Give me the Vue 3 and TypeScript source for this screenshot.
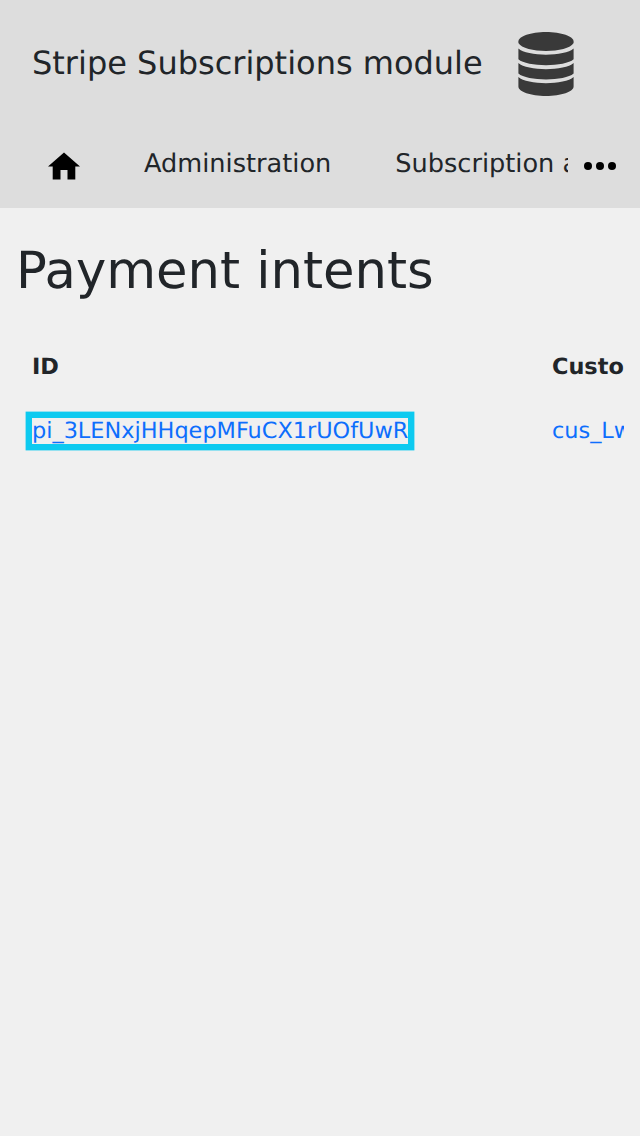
<script setup lang="ts">
interface Intent {
  id: string
  customer: string
}

const navItems: string[] = ['Administration', 'Subscription assistant']
const columns: string[] = ['ID', 'Customer']
const intents: Intent[] = [{ id: 'pi_3LENxjHHqepMFuCX1rUOfUwR', customer: 'cus_LwHqepMFuCX1' }]
</script>

<template>
  <div class="page">
    <header class="header">
      <div class="brand">
        <span class="title">Stripe Subscriptions module</span>
        <svg class="logo" width="56" height="64" viewBox="0 0 56 64" fill="#393939">
          <path d="M.4 9.500C.4 4.300 12.800 0 28 0S55.600 4.300 55.600 9.500V11C50 21.600 6 21.600 .4 11Z" />
          <path d="M.4 16.500C9 24.700 47 24.700 55.600 16.500V27.300C47 35.200 9 35.200 .4 27.300Z" />
          <path d="M.4 31C9 39.200 47 39.200 55.600 31V41.500C47 49.400 9 49.400 .4 41.500Z" />
          <path d="M.4 45.100C9 53.200 47 53.200 55.600 45.100V54.500C55.600 59.700 43.200 64 28 64S.4 59.700 .4 54.500Z" />
        </svg>
      </div>
      <nav class="nav">
        <div class="nav-scroll">
          <a class="home" aria-label="Home">
            <svg width="32" height="28" viewBox="0 0 32 28">
              <path d="M16 .5L32 14.500H27.300V27.500H19.500V18H12.500V27.500H4.700V14.500H0Z" />
            </svg>
          </a>
          <a v-for="item in navItems" :key="item" class="nav-link">{{ item }}</a>
        </div>
        <button class="more" aria-label="More">
          <svg width="32" height="8" viewBox="0 0 32 8">
            <circle cx="4" cy="4" r="4" />
            <circle cx="16" cy="4" r="4" />
            <circle cx="28" cy="4" r="4" />
          </svg>
        </button>
      </nav>
    </header>
    <main class="main">
      <h1>Payment intents</h1>
      <div class="table-wrap">
        <table>
          <thead>
            <tr>
              <th v-for="column in columns" :key="column">{{ column }}</th>
            </tr>
          </thead>
          <tbody>
            <tr v-for="intent in intents" :key="intent.id">
              <td><a class="focused">{{ intent.id }}</a></td>
              <td><a>{{ intent.customer }}</a></td>
            </tr>
          </tbody>
        </table>
      </div>
    </main>
  </div>
</template>

<style>
body {
  margin: 0;
  background: #f0f0f0;
}
</style>

<style scoped>
.page {
  min-height: 1136px;
  color: #212529;
  background: #f0f0f0;
  font-family: "DejaVu Sans", sans-serif;
  text-rendering: geometricPrecision;
  overflow: hidden;
}
.header {
  height: 208px;
  background: #ddd;
}
.brand {
  display: flex;
  align-items: center;
  height: 128px;
  padding-left: 32px;
}
.title {
  width: 486px;
  padding-bottom: 2px;
  font-size: 32px;
  line-height: 48px;
  white-space: nowrap;
}
.logo {
  flex: none;
}
.nav {
  display: flex;
  height: 80px;
}
.nav-scroll {
  display: flex;
  width: 568px;
  overflow: hidden;
}
.home {
  flex: none;
  padding: 24px 32px 0 48px;
}
.home svg {
  display: block;
}
.nav-link {
  flex: none;
  padding: 17px 32px 0;
  font-size: 25.6px;
  line-height: 38.4px;
  white-space: nowrap;
}
.more {
  display: flex;
  width: 72px;
  padding: 34px 0 0 16px;
  border: 0;
  background: none;
}
.main {
  padding: 33px 16px 0;
}
h1 {
  margin: 0;
  font-size: 51.2px;
  font-weight: 400;
  line-height: 61px;
}
.table-wrap {
  margin-top: 32px;
  overflow: hidden;
}
table {
  width: 860px;
  border-collapse: collapse;
  table-layout: fixed;
  font-size: 22.4px;
  line-height: 33px;
}
th,
td {
  height: 33px;
  padding: 16px;
  text-align: left;
  white-space: nowrap;
}
th {
  padding: 17px 16px 15px;
}
th:first-child {
  width: 488px;
}
td a {
  color: #0d6efd;
}
td a.focused {
  box-shadow: 0 0 0 6.4px #0dcaf0;
}
</style>
